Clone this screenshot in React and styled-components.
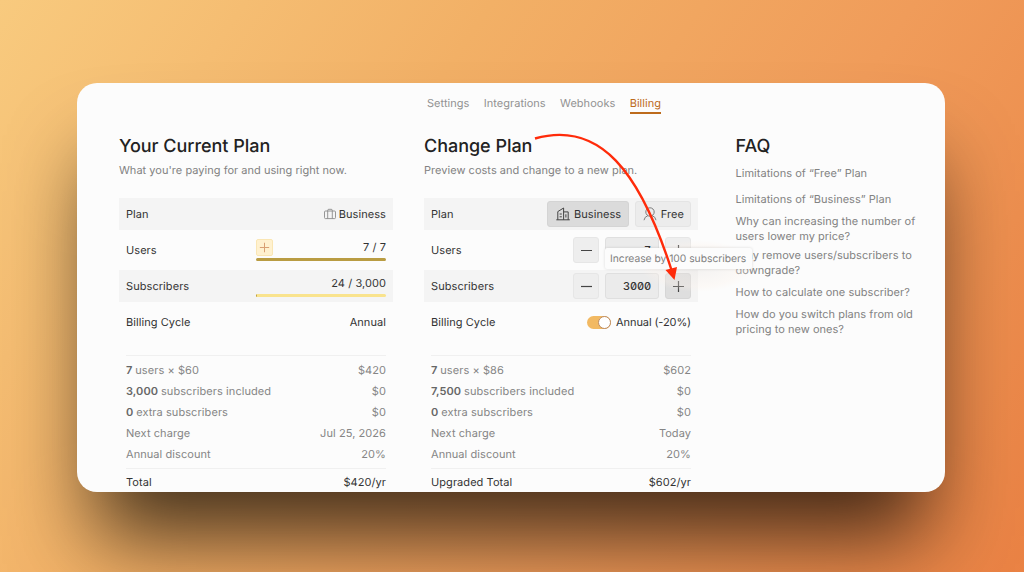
import React from 'react'
import styled, { createGlobalStyle } from 'styled-components'

const GlobalStyle=createGlobalStyle`
*{
box-sizing: border-box;
}
body{
margin: 0;
overflow: hidden;
font-family: Inter, sans-serif;
text-rendering: geometricPrecision;
}
`
const Page=styled.div`
position: relative;
width: 1024px;
height: 572px;
padding: 82.5px 79.5px 80px 77px;
background: linear-gradient(124deg, #f8ca7e 0%, #f2b066 35%, #f09c5a 65%, #ea8244 100%);
overflow: hidden;
`
const Card=styled.div`
height: 409.5px;
border-radius: 20px;
background: #fcfcfc;
box-shadow: 0 62px 84px -18px rgba(0,0,0,0.72);
padding-top: 12.5px;
overflow: hidden;
font-size: 11px;
letter-spacing: 0.07px;
color: #333;
`
const Tabs=styled.div`
display: flex;
gap: 14.4px;
margin-left: 350px;
height: 18px;
letter-spacing: 0.03px;
`
const Tab=styled.div`
height: 18.5px;
line-height: 16px;
white-space: nowrap;
color: ${(p)=>p.$active ? "#bd6b1c" : "#929292"};
border-bottom: 2px solid ${(p)=>p.$active ? "#bd6b1c" : "transparent"};
`
const Columns=styled.div`
display: grid;
grid-template-columns: 274px 274px 190px;
column-gap: 31px;
margin: 21px 0 0 42px;
`
const Title=styled.div`
font-size: 18px;
line-height: 26px;
font-weight: 500;
letter-spacing: -0.03px;
color: #222;
white-space: nowrap;
`
const Subtitle=styled.div`
line-height: 16px;
margin-top: 2px;
letter-spacing: 0.03px;
color: #828282;
white-space: nowrap;
`
const Rows=styled.div`
display: flex;
flex-direction: column;
gap: 4px;
margin-top: 20px;
`
const Row=styled.div`
display: flex;
align-items: center;
justify-content: space-between;
height: 32px;
padding: 0 7px;
background: ${(p)=>p.$shaded ? "#f4f4f4" : "transparent"};
`
const Group=styled.div`
display: flex;
align-items: center;
gap: ${(p)=>p.$gap || 6}px;
white-space: nowrap;
`
const Meter=styled.div`
width: 130px;
display: flex;
flex-direction: column;
margin-top: -1px;
`
const MeterTop=styled.div`
display: flex;
align-items: center;
justify-content: space-between;
height: 17px;
margin-bottom: 2px;
`
const MeterValue=styled.div`
margin-left: auto;
`
const Track=styled.div`
height: 3px;
border-radius: 2px;
background: #f9e38d;
overflow: hidden;
`
const Fill=styled.div`
height: 3px;
background: #b99c42;
`
const AddButton=styled.div`
display: flex;
align-items: center;
justify-content: center;
width: 17px;
height: 17px;
border: 1px solid #fae6b4;
border-radius: 2px;
background: #fff1cf;
color: #d9a074;
`
const PlanButton=styled.div`
display: flex;
align-items: center;
gap: 3.5px;
height: 26px;
padding: 0 ${(p)=>p.$active ? "7px 0 8px" : "6px 0 7px"};
border: 1px solid ${(p)=>p.$active ? "#d4d4d4" : "#e4e4e4"};
border-radius: 3px;
background: ${(p)=>p.$active ? "#dbdbdb" : "#ececec"};
`
const StepButton=styled.div`
display: flex;
align-items: center;
justify-content: center;
width: 26px;
height: 26px;
border: 1px solid ${(p)=>p.$hover ? "#d6d6d6" : "#e6e6e6"};
border-radius: 3px;
background: ${(p)=>p.$hover ? "#dedede" : "#eeeeee"};
color: #444;
`
const StepInput=styled.div`
width: 54px;
height: 26px;
line-height: 24px;
padding-right: 7px;
border: 1px solid #dfdfdf;
border-radius: 3px;
background: #ebebeb;
text-align: right;
font-weight: 500;
letter-spacing: -0.1px;
font-feature-settings: "zero", "tnum";
`
const Switch=styled.div`
display: flex;
justify-content: flex-end;
width: 24px;
height: 13px;
border-radius: 7px;
background: #f2b962;
`
const Knob=styled.div`
width: 13px;
height: 13px;
border: 1px solid #bc8b62;
border-radius: 50%;
background: #fff;
`
const CycleLabel=styled.div`
letter-spacing: -0.1px;
`
const Costs=styled.div`
margin: 17px 7px 0;
border-top: 1px solid #f0f0f0;
padding-top: 4px;
`
const CostRow=styled.div`
display: flex;
justify-content: space-between;
height: 21px;
line-height: 21px;
color: #858585;
b{
font-weight: 600;
color: #666;
}
`
const TotalRow=styled.div`
display: flex;
justify-content: space-between;
margin-top: 3px;
border-top: 1px solid #f0f0f0;
line-height: 27px;
color: #333;
`
const Faq=styled.div`
margin-left: 6.5px;
letter-spacing: 0.03px;
`
const Question=styled.div`
line-height: 15px;
margin-top: ${(p)=>p.$top}px;
color: #828282;
white-space: pre;
`
const Glow=styled.div`
position: absolute;
left: 640px;
top: 240px;
width: 115px;
height: 52px;
border-radius: 50%;
background: radial-gradient(closest-side, rgba(225,222,220,0.35), rgba(252,242,234,0.3) 80%, transparent);
`
const Tooltip=styled.div`
position: absolute;
left: 605px;
top: 248px;
width: 147px;
height: 21px;
line-height: 22px;
padding-left: 5px;
border-radius: 2px;
background: #fcfcfc;
box-shadow: 0 0 3px rgba(0,0,0,0.14);
font-size: 10.3px;
letter-spacing: -0.02px;
color: #808080;
white-space: nowrap;
`
const Annotation=styled.svg`
position: absolute;
left: 0;
top: 0;
`

const Plus=({size=13})=>(
    <svg width={size} height={size} viewBox="0 0 13 13" fill="none" stroke="currentColor" strokeWidth="1.2">
        <path d="M6.5 1v11M1 6.5h11" />
    </svg>
)
const Minus=()=>(
    <svg width="13" height="13" viewBox="0 0 13 13" fill="none" stroke="currentColor" strokeWidth="1.2">
        <path d="M1 6.5h11" />
    </svg>
)
const Briefcase=()=>(
    <svg width="12" height="12" viewBox="0 0 12 12" fill="none" stroke="#8b8b8b" strokeWidth="0.9">
        <rect x="0.5" y="3" width="11" height="7.6" rx="1" />
        <path d="M3.7 10.6V2.4Q3.7 1.3 4.8 1.3H7.2Q8.3 1.3 8.3 2.4V10.6" />
    </svg>
)
const Building=()=>(
    <svg width="14" height="14" viewBox="0 0 14 14" fill="none" stroke="#444" strokeWidth="1">
        <path d="M0.3 12.8H13.8M1.8 12.8V4.6L7.6 1V12.8M7.6 4.9H12.2V12.8M3.6 7h2.2M3.6 9.8h2.2M9.9 7.3v3.2" />
    </svg>
)
const Person=()=>(
    <svg width="14" height="14" viewBox="0 0 14 14" fill="none" stroke="#777" strokeWidth="0.95">
        <circle cx="7" cy="5" r="4.2" />
        <path d="M1 13.2Q1.6 9.6 4.8 8.7M13 13.2Q12.4 9.6 9.2 8.7" />
    </svg>
)

function CostList({ items, label, total }) {
    return (
        <Costs>
            {
                items.map((a)=>(
                    <CostRow key={a.text}>
                        <div>{a.count && <b>{a.count} </b>}{a.text}</div>
                        <div>{a.value}</div>
                    </CostRow>
                ))
            }
            <TotalRow>
                <div>{label}</div>
                <div>{total}</div>
            </TotalRow>
        </Costs>
    )
}

export default function App() {

    let tabs = ["Settings","Integrations","Webhooks","Billing"]
    let currentCosts = [{ count:"7",text:"users × $60",value:"$420"},{ count:"3,000",text:"subscribers included",value:"$0"},{ count:"0",text:"extra subscribers",value:"$0"},{ text:"Next charge",value:"Jul 25, 2026"},{ text:"Annual discount",value:"20%"}]
    let newCosts = [{ count:"7",text:"users × $86",value:"$602"},{ count:"7,500",text:"subscribers included",value:"$0"},{ count:"0",text:"extra subscribers",value:"$0"},{ text:"Next charge",value:"Today"},{ text:"Annual discount",value:"20%"}]
    let questions = [
        { top:6,text:"Limitations of “Free” Plan"},
        { top:11,text:"Limitations of “Business” Plan"},
        { top:7,text:"Why can increasing the number of\nusers lower my price?"},
        { top:4,text:"Why remove users/subscribers to\ndowngrade?"},
        { top:7,text:"How to calculate one subscriber?"},
        { top:7,text:"How do you switch plans from old\npricing to new ones?"},
    ]

    return (
        <Page>
            <GlobalStyle />
            <Card>
                <Tabs>
                    {tabs.map((t)=><Tab key={t} $active={t==="Billing"}>{t}</Tab>)}
                </Tabs>
                <Columns>
                    <div>
                        <Title>Your Current Plan</Title>
                        <Subtitle>What you're paying for and using right now.</Subtitle>
                        <Rows>
                            <Row $shaded>
                                <div>Plan</div>
                                <Group $gap={3}><Briefcase />Business</Group>
                            </Row>
                            <Row>
                                <div>Users</div>
                                <Meter>
                                    <MeterTop>
                                        <AddButton><Plus size={11} /></AddButton>
                                        <MeterValue>7 / 7</MeterValue>
                                    </MeterTop>
                                    <Track><Fill style={{ width:"100%" }} /></Track>
                                </Meter>
                            </Row>
                            <Row $shaded>
                                <div>Subscribers</div>
                                <Meter>
                                    <MeterTop>
                                        <MeterValue>24 / 3,000</MeterValue>
                                    </MeterTop>
                                    <Track><Fill style={{ width:"0.8%" }} /></Track>
                                </Meter>
                            </Row>
                            <Row>
                                <div>Billing Cycle</div>
                                <div>Annual</div>
                            </Row>
                        </Rows>
                        <CostList items={currentCosts} label="Total" total="$420/yr" />
                    </div>
                    <div>
                        <Title>Change Plan</Title>
                        <Subtitle>Preview costs and change to a new plan.</Subtitle>
                        <Rows>
                            <Row $shaded>
                                <div>Plan</div>
                                <Group>
                                    <PlanButton $active><Building />Business</PlanButton>
                                    <PlanButton><Person />Free</PlanButton>
                                </Group>
                            </Row>
                            <Row>
                                <div>Users</div>
                                <Group>
                                    <StepButton><Minus /></StepButton>
                                    <StepInput>7</StepInput>
                                    <StepButton><Plus /></StepButton>
                                </Group>
                            </Row>
                            <Row $shaded>
                                <div>Subscribers</div>
                                <Group>
                                    <StepButton><Minus /></StepButton>
                                    <StepInput>3000</StepInput>
                                    <StepButton $hover><Plus /></StepButton>
                                </Group>
                            </Row>
                            <Row>
                                <div>Billing Cycle</div>
                                <Group $gap={5}><Switch><Knob /></Switch><CycleLabel>Annual (-20%)</CycleLabel></Group>
                            </Row>
                        </Rows>
                        <CostList items={newCosts} label="Upgraded Total" total="$602/yr" />
                    </div>
                    <Faq>
                        <Title>FAQ</Title>
                        {questions.map((q)=><Question key={q.text} $top={q.top}>{q.text}</Question>)}
                    </Faq>
                </Columns>
            </Card>
            <Glow />
            <Tooltip>Increase by 100 subscribers</Tooltip>
            <Annotation width="1024" height="572" viewBox="0 0 1024 572">
                <path d="M535 138.5C600 120 640 172 671.5 270" fill="none" stroke="#ff2b0a" strokeWidth="2.4" />
                <path d="M674.5 280L665.5 270L677 267Z" fill="#ff2b0a" />
            </Annotation>
        </Page>
    )
}
